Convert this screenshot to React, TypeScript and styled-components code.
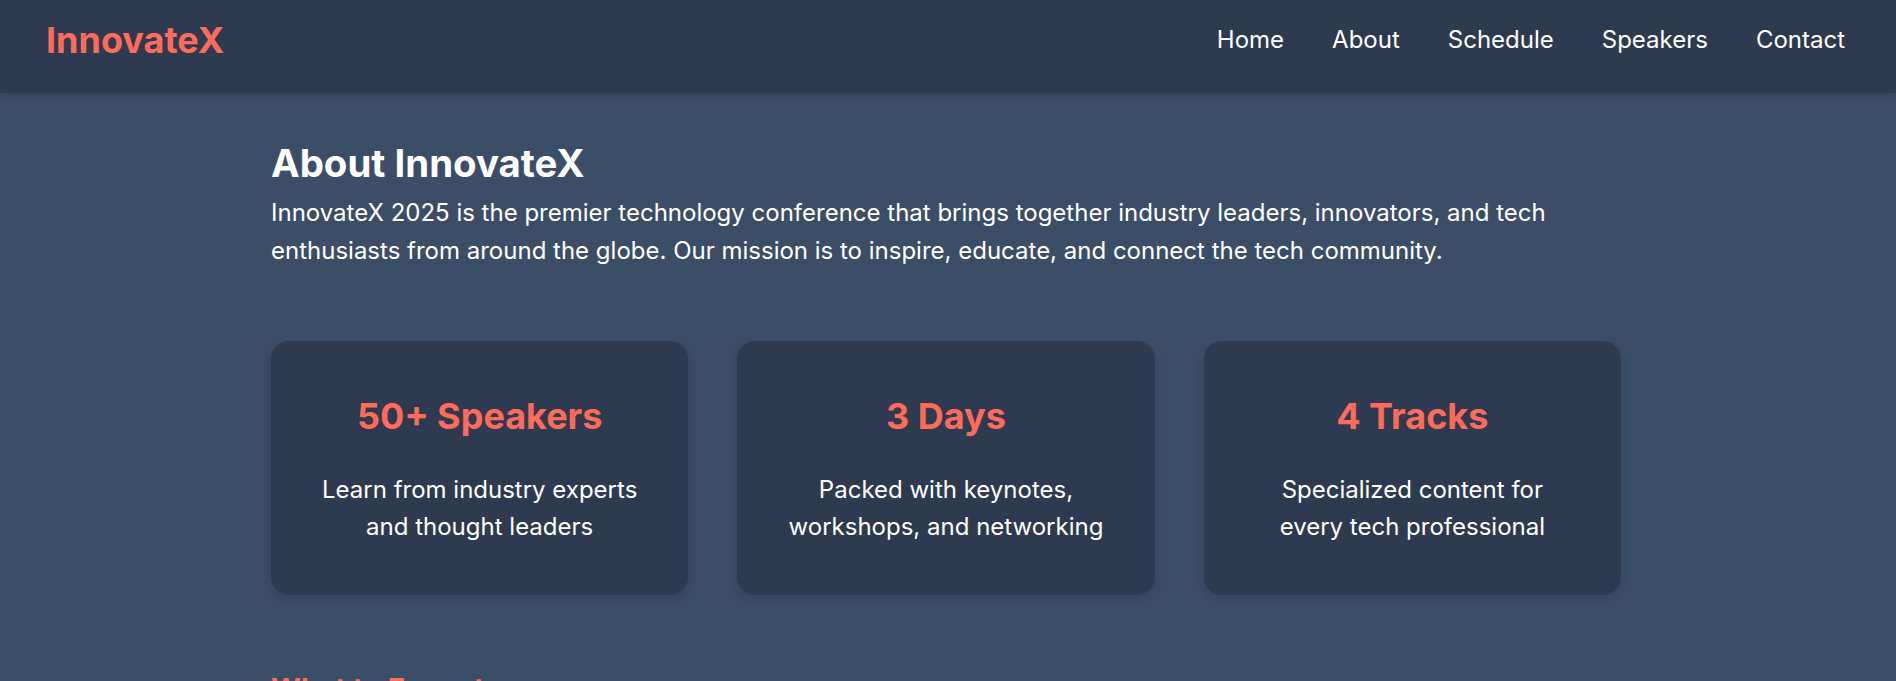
import React from "react";
import styled, { createGlobalStyle } from "styled-components";

const GlobalStyle = createGlobalStyle`
  * { box-sizing: border-box; }
  html, body { margin: 0; padding: 0; }
  body {
    background: #3c4d68;
    color: #ffffff;
    font-family: Inter, "Noto Sans", "Liberation Sans", sans-serif;
  }
`;

const Header = styled.header`
  height: 93px;
  background: #2e3a4f;
  display: flex;
  align-items: center;
  justify-content: space-between;
  padding: 0 51px 14px 46px;
  box-shadow: 0 2px 6px rgba(0, 0, 0, 0.15);
`;

const Logo = styled.div`
  font-size: 36px;
  font-weight: 700;
  color: #ff6b5b;
`;

const Nav = styled.nav`
  display: flex;
  gap: 48px;
`;

const NavLink = styled.a`
  color: #ffffff;
  text-decoration: none;
  font-size: 24px;
  font-weight: 400;
`;

const Main = styled.main`
  max-width: 1354px;
  margin: 0 auto;
  padding-right: 4px;
`;

const Section = styled.section`
  padding-top: 47px;
`;

const Heading = styled.h2`
  margin: 0 0 8px;
  font-size: 38.4px;
  line-height: 1.2;
  font-weight: 700;
  color: #ffffff;
`;

const SubHeading = styled.h2`
  margin: 0;
  font-size: 28.8px;
  line-height: 1.2;
  font-weight: 700;
  color: #ff6b5b;
`;

const Lead = styled.p`
  margin: 0;
  font-size: 24px;
  line-height: 38px;
`;

const CardGrid = styled.div`
  display: grid;
  grid-template-columns: repeat(3, 1fr);
  gap: 49px;
  margin-top: 71px;
`;

const Card = styled.div`
  background: #2e3a4f;
  border-radius: 18px;
  padding: 54px 24px 49px;
  text-align: center;
  box-shadow: 0 4px 12px rgba(0, 0, 0, 0.12);
`;

const CardTitle = styled.h3`
  margin: 0 0 32px;
  font-size: 36px;
  line-height: 1.21;
  font-weight: 700;
  color: #ff6b5b;
`;

const CardText = styled.p`
  margin: 0;
  font-size: 24px;
  line-height: 37.5px;
  color: #ffffff;
`;

const NextSection = styled.section`
  padding-top: 77px;
  padding-bottom: 200px;
`;

const cards = [
  { title: "50+ Speakers", lines: ["Learn from industry experts", "and thought leaders"] },
  { title: "3 Days", lines: ["Packed with keynotes,", "workshops, and networking"] },
  { title: "4 Tracks", lines: ["Specialized content for", "every tech professional"] },
];

export default function App() {
  return (
    <>
      <GlobalStyle />
      <Header>
        <Logo>InnovateX</Logo>
        <Nav>
          <NavLink href="#home">Home</NavLink>
          <NavLink href="#about">About</NavLink>
          <NavLink href="#schedule">Schedule</NavLink>
          <NavLink href="#speakers">Speakers</NavLink>
          <NavLink href="#contact">Contact</NavLink>
        </Nav>
      </Header>
      <Main>
        <Section id="about">
          <Heading>About InnovateX</Heading>
          <Lead>
            InnovateX 2025 is the premier technology conference that brings together industry leaders, innovators, and tech
            enthusiasts from around the globe. Our mission is to inspire, educate, and connect the tech community.
          </Lead>
          <CardGrid>
            {cards.map((c) => (
              <Card key={c.title}>
                <CardTitle>{c.title}</CardTitle>
                <CardText>
                  {c.lines[0]}
                  <br />
                  {c.lines[1]}
                </CardText>
              </Card>
            ))}
          </CardGrid>
        </Section>
        <NextSection>
          <SubHeading>What to Expect</SubHeading>
        </NextSection>
      </Main>
    </>
  );
}
